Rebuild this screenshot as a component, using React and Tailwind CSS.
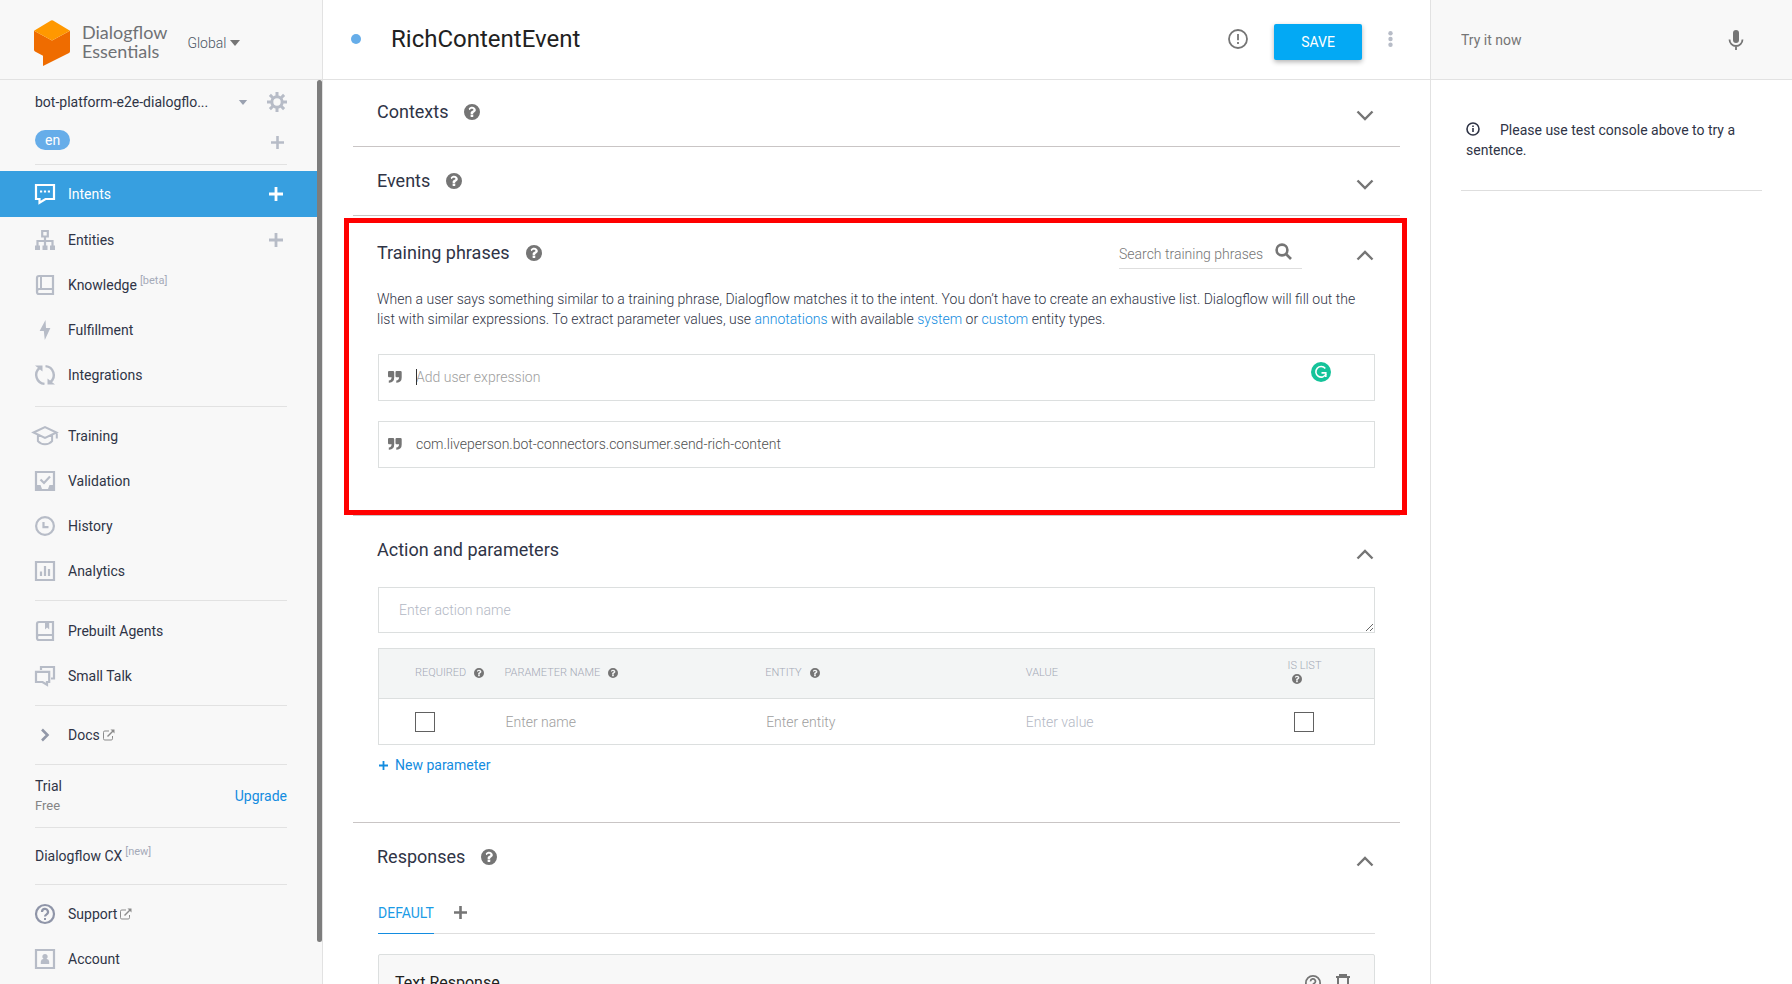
import React from "react";

const HELP_PATH =
  "M8 0a8 8 0 1 0 0 16A8 8 0 0 0 8 0zm1.3 12.6a.4.4 0 0 1-.4.4H7a.4.4 0 0 1-.4-.4v-1.8c0-.2.2-.4.4-.4h1.9c.2 0 .4.2.4.4zm2.5-6.5c0 1.4-1 2-1.7 2.4-.6.3-.9.7-.9 1 0 .2-.1.4-.3.4H7c-.2 0-.4-.2-.4-.4v-.4c0-1.1.9-1.900 1.800-2.300.7-.3 1-.6 1-1.100 0-.6-.700-1-1.500-1-.4 0-.9.1-1.200.3-.3.200-.6.5-1 1-.1.200-.4.2-.5.1L4.900 5c-.2-.1-.2-.4-.1-.5C5.600 3.300 6.700 2.700 8.200 2.700c1.800 0 3.600 1.300 3.600 3.400z";

function Help({ small }) {
  return (
    <svg viewBox="0 0 16 16" className={small ? "size-[10px] shrink-0" : "size-4 shrink-0"} fill="#757575" aria-hidden="true">
      <path d={HELP_PATH} />
    </svg>
  );
}

function Chevron({ up }) {
  return (
    <svg viewBox="0 0 18 12" className="h-3 w-[18px]" fill="none" stroke="#757575" strokeWidth="2.4" aria-hidden="true">
      {up ? <path d="M1.500 10.500 9 3l7.500 7.500" /> : <path d="M1.500 1.500 9 9l7.500-7.500" />}
    </svg>
  );
}

function Plus({ className }) {
  return (
    <svg viewBox="0 0 14 14" className={className} fill="none" stroke="currentColor" strokeWidth="2.8" aria-hidden="true">
      <path d="M7 0v14M0 7h14" />
    </svg>
  );
}

function External() {
  return (
    <svg viewBox="0 0 12 12" className="size-3 shrink-0" fill="none" stroke="#8b8b8b" strokeWidth="1" aria-hidden="true">
      <path d="M6 2H1.800Q.5 2 .5 3.300v6.400Q.5 11 1.800 11h6.400q1.300 0 1.300-1.300V7" />
      <path d="M4.500 7.500 10 2" strokeWidth="1.500" />
      <path d="M7.500.5h4v4z" fill="#8b8b8b" stroke="none" />
    </svg>
  );
}

function Ico({ children, className = "" }) {
  return (
    <svg viewBox="0 0 20 20" className={`size-5 shrink-0 overflow-visible ${className}`} fill="none" stroke="currentColor" strokeWidth="2.2" aria-hidden="true">
      {children}
    </svg>
  );
}

const icons = {
  intents: (
    <Ico className="text-white">
      <path d="M1 1h18v14h-8.500l-6 3.700V15H1z" />
      <path d="M5 7.500h2.200M8.900 7.500h2.200M12.800 7.500H15" />
    </Ico>
  ),
  entities: (
    <Ico>
      <path d="M7.200 1h5.600v5.500H7.200zM10 7v9M2.500 16v-5h15v5" />
      <path d="M0 15.500h5V20H0zM7.500 15.500h5V20h-5zM15 15.500h5V20h-5z" fill="currentColor" stroke="none" />
    </Ico>
  ),
  knowledge: (
    <Ico>
      <path d="M4 1h14v18H4q-2 0-2-2V3q0-2 2-2z" />
      <path d="M6 1v13M18 14H4q-2 0-2 2.500" strokeWidth="2" />
    </Ico>
  ),
  fulfillment: (
    <Ico>
      <path d="M10.500 0 4.600 11h4.200L9.800 20l5.600-12H11z" fill="currentColor" stroke="none" />
    </Ico>
  ),
  integrations: (
    <Ico>
      <path d="M9.500 18.900A9 9 0 0 1 4.500 3M10.500 1.100A9 9 0 0 1 15.500 17" strokeWidth="2.400" />
      <path d="M0 .5h7.500v6zM20 19.500h-7.500v-6z" fill="currentColor" stroke="none" />
    </Ico>
  ),
  training: (
    <Ico>
      <path d="M-1.500 6.500 10 1.200l11.500 5.300L10 11.800zM2.900 9v6.200Q5.500 18.300 10 18.300t7.100-3.100V9M21.800 6.500v6" strokeWidth="2" />
    </Ico>
  ),
  validation: (
    <Ico>
      <path d="M1 1h18v18H1z" />
      <path d="M5.500 8.500 9 12l6-6.500" />
      <path d="M1 14h4.500l1.500 4h6l1.500-4H19v5H1z" fill="currentColor" stroke="none" />
    </Ico>
  ),
  history: (
    <Ico>
      <circle cx="10" cy="10" r="8.900" />
      <path d="M8.500 6v5.200h5" />
    </Ico>
  ),
  analytics: (
    <Ico>
      <path d="M1 1h18v18H1z" />
      <path d="M6 15v-4.500M10 15V5M14 15V8" />
    </Ico>
  ),
  prebuilt: (
    <Ico>
      <path d="M4 1h14v18H4q-2 0-2-2V3q0-2 2-2zM18 14H4q-2 0-2 2.500" />
      <path d="M10 1h4.200v7.500L12.100 6.500 10 8.500z" fill="currentColor" stroke="none" />
    </Ico>
  ),
  talk: (
    <Ico>
      <path d="M6 4V1h13v11.500h-3" />
      <path d="M1 5.800h13.200V16H12v2.800L7.500 16H1z" />
    </Ico>
  ),
  docs: (
    <Ico className="text-[#9298a8]">
      <path d="m7 4.500 5.500 5.500L7 15.500" strokeWidth="2.600" />
    </Ico>
  ),
  support: (
    <Ico className="text-[#8f95a8]">
      <circle cx="10" cy="10" r="9" />
      <path d="M7 8a3 3 0 1 1 4.600 2.400Q10 11.400 10 12.500" />
      <path d="M9 14h2v2H9z" fill="currentColor" stroke="none" />
    </Ico>
  ),
  account: (
    <Ico>
      <path d="M1 1h18v18H1z" />
      <path d="M10 5a2.600 2.600 0 0 1 1.500 4.800q2.700.5 2.700 3V15H5.800v-2.200q0-2.500 2.700-3A2.600 2.600 0 0 1 10 5z" fill="currentColor" stroke="none" />
    </Ico>
  ),
};

function NavItem({ icon, label, tag, external, add, active }) {
  return (
    <div
      className={
        active
          ? "mr-[5px] flex h-[46px] items-center bg-[#379fe0] pr-[34px] pl-[35px] text-white"
          : "mr-[5px] flex h-[45px] items-center pr-[34px] pl-[35px] text-[#2f3446]"
      }
    >
      <a href="#" className="flex flex-1 items-center gap-[13px]">
        <span className={active ? "" : "text-[#b7bcc7]"}>{icons[icon]}</span>
        <span className="flex items-center gap-[3px]">
          {label}
          {tag && <span className="-mt-2 text-[11px] text-[#a5aab8]">{tag}</span>}
          {external && <External />}
        </span>
      </a>
      {add && (
        <button type="button" aria-label={`Create ${label}`} className={active ? "text-white" : "text-[#b7bcc7]"}>
          <Plus className="size-[14px]" />
        </button>
      )}
    </div>
  );
}

function Divider() {
  return <hr className="mr-[35px] ml-[35px] border-[#e2e2e2]" />;
}

function Sidebar() {
  return (
    <aside className="relative flex w-[323px] shrink-0 flex-col border-r border-[#e2e2e2] bg-[#f8f8f8] text-sm">
      <header className="flex h-20 shrink-0 items-center border-b border-[#e2e2e2] pt-1 pl-[33px]">
        <svg viewBox="0 0 38 46" className="mt-0.5 h-[46px] w-[38px] shrink-0" aria-hidden="true">
          <path d="M1 10.800 19 20.500l18-9.700v20.400q0 1.200-1 1.800L10 46V35.800L2 31.500q-1-.6-1-1.700z" fill="#ef6c00" />
          <path d="M1 10.800 18 .6q1-.6 2 0l17 10.200-18 9.700z" fill="#ff9800" />
        </svg>
        <div className="ml-[11px] font-['Lato',sans-serif] text-[18px] leading-[19px] text-[#6f7175]">
          Dialogflow
          <br />
          Essentials
        </div>
        <button type="button" className="mt-0.5 ml-5 flex items-center gap-1 font-light text-[#4b5563]">
          Global
          <svg viewBox="0 0 10 6" className="h-1.5 w-2.5" fill="#757575" aria-hidden="true">
            <path d="M0 0h10L5 6z" />
          </svg>
        </button>
      </header>

      <div className="absolute top-20 right-0 h-[862px] w-[5px] rounded-full bg-[#7d7d7d]" />

      <div className="flex h-11 items-center pr-[35px] pl-[35px]">
        <span className="flex-1 text-[#2f3446]">bot-platform-e2e-dialogflo...</span>
        <button type="button" aria-label="Choose agent" className="mr-[19px]">
          <svg viewBox="0 0 10 6" className="h-[5px] w-2.5" fill="#9aa1b0" aria-hidden="true">
            <path d="M0 0h10L5 6z" />
          </svg>
        </button>
        <button type="button" aria-label="Agent settings">
          <svg viewBox="0 0 20 20" className="size-5" fill="none" stroke="#b7bcc7" aria-hidden="true">
            <circle cx="10" cy="10" r="5.200" strokeWidth="3" />
            <path d="M10 0v4M10 16v4M0 10h4M16 10h4M2.900 2.900l2.900 2.900M14.200 14.200l2.900 2.900M2.900 17.100l2.900-2.900M14.200 5.800l2.900-2.900" strokeWidth="3" />
          </svg>
        </button>
      </div>
      <div className="flex h-10 items-center justify-between pr-[38px] pb-2 pl-[35px]">
        <button type="button" className="rounded-full bg-[#66ade9] px-[10px] leading-5 text-white">
          en
        </button>
        <button type="button" aria-label="Add language" className="mt-1 text-[#b7bcc7]">
          <Plus className="size-[13px]" />
        </button>
      </div>
      <Divider />

      <nav className="pt-1.5">
        <NavItem icon="intents" label="Intents" add active />
        <NavItem icon="entities" label="Entities" add />
        <NavItem icon="knowledge" label="Knowledge" tag="[beta]" />
        <NavItem icon="fulfillment" label="Fulfillment" />
        <NavItem icon="integrations" label="Integrations" />
      </nav>
      <div className="h-[9px]" />
      <Divider />
      <nav className="pt-1.5 pb-[7px]">
        <NavItem icon="training" label="Training" />
        <NavItem icon="validation" label="Validation" />
        <NavItem icon="history" label="History" />
        <NavItem icon="analytics" label="Analytics" />
      </nav>
      <Divider />
      <nav className="py-[7px]">
        <NavItem icon="prebuilt" label="Prebuilt Agents" />
        <NavItem icon="talk" label="Small Talk" />
      </nav>
      <Divider />
      <nav className="pt-1.5 pb-[7px]">
        <NavItem icon="docs" label="Docs" external />
      </nav>
      <Divider />
      <div className="flex h-[62px] items-center justify-between px-[35px]">
        <div className="leading-5">
          <div className="text-[#2f3446]">Trial</div>
          <div className="text-[13px] leading-5 text-[#858585]">Free</div>
        </div>
        <a href="#" className="text-[#138ce0]">
          Upgrade
        </a>
      </div>
      <Divider />
      <div className="flex h-14 items-center px-[35px] text-[#2f3446]">
        <a href="#" className="flex items-center gap-[3px]">
          Dialogflow CX
          <span className="-mt-2 text-[11px] text-[#a5aab8]">[new]</span>
        </a>
      </div>
      <Divider />
      <nav className="pt-1.5">
        <NavItem icon="support" label="Support" external />
        <NavItem icon="account" label="Account" />
      </nav>
    </aside>
  );
}

function SectionHead({ title, help, open, children }) {
  return (
    <div className="flex h-[68px] items-center pr-[26px] pl-6">
      <h2 className="text-lg text-[#2f3446]">{title}</h2>
      {help && (
        <button type="button" aria-label={`Help on ${title}`} className="ml-4">
          <Help />
        </button>
      )}
      <div className="flex-1" />
      {children}
      <button type="button" aria-label={`Toggle ${title}`} className={children ? "mt-1" : "mt-[7px]"}>
        <Chevron up={open} />
      </button>
    </div>
  );
}

function Quote() {
  return (
    <svg viewBox="0 0 14 12" className="h-3 w-[14px] shrink-0" fill="#757575" aria-hidden="true">
      <path d="M1 0h4q1.200 0 1.200 1.200V6.500Q6.200 11.500 1.200 11.800H.8V9.500Q3.600 9.300 3.600 6.200H1Q0 6.200 0 5V1.200Q0 0 1 0zM8.500 0h4q1.200 0 1.200 1.200V6.500q0 5-5 5.300h-.4V9.500q2.800-.2 2.800-3.300H8.500q-1 0-1-1.200V1.200Q7.500 0 8.500 0z" />
    </svg>
  );
}

function TrainingPhrases() {
  return (
    <section className="relative h-[300px] border-b border-[#c9c5c5]">
      <div className="pointer-events-none absolute top-0.5 -right-[7px] bottom-0 -left-[9px] border-5 border-[#ff0000]" />
      <div className="pt-[3px]">
        <SectionHead title="Training phrases" help open>
          <div className="mt-1.5 mr-[54px] flex w-[183px] items-center border-b border-[#dedede] pb-1">
            <input
              aria-label="Search training phrases"
              placeholder="Search training phrases"
              className="w-[156px] text-sm font-light outline-none placeholder:text-[#757575]"
            />
            <button type="button" aria-label="Search" className="-mt-[5px]">
              <svg viewBox="0 0 17 17" className="size-[17px]" fill="none" stroke="#757575" strokeWidth="2.600" aria-hidden="true">
                <circle cx="7" cy="7" r="5.400" />
                <path d="m11 11 5 5" />
              </svg>
            </button>
          </div>
        </SectionHead>
      </div>
      <p className="mt-[2px] px-6 text-sm leading-5 font-light text-[#2f3446]">
        When a user says something similar to a training phrase, Dialogflow matches it to the intent. You don’t have to create an
        exhaustive list. Dialogflow will fill out the list with similar expressions. To extract parameter values, use{" "}
        <a href="#" className="text-[#138ce0]">annotations</a> with available{" "}
        <a href="#" className="text-[#138ce0]">system</a> or{" "}
        <a href="#" className="text-[#138ce0]">custom</a> entity types.
      </p>
      <div className="mx-[25px] mt-[25px] flex h-[47px] items-center border border-[#dcdfdf] pb-0.5 pl-[9px]">
        <Quote />
        <div className="relative ml-[14px] flex flex-1 items-center">
          <input
            aria-label="Add user expression"
            placeholder="Add user expression"
            className="w-full text-sm font-light outline-none placeholder:text-[#9e9e9e]"
          />
          <span className="absolute left-0 h-4 w-px bg-[#333333]" />
        </div>
        <svg viewBox="0 0 20 20" className="mr-[43px] mb-[9px] size-5 shrink-0" aria-hidden="true">
          <circle cx="10" cy="10" r="10" fill="#15c39a" />
          <path d="M14.300 6.500A5.300 5.300 0 1 0 15 12" fill="none" stroke="#fff" strokeWidth="1.600" />
          <path d="M10.500 10.900h4.300v4" fill="none" stroke="#fff" strokeWidth="1.600" />
        </svg>
      </div>
      <div className="mx-[25px] mt-5 flex h-[47px] items-center border border-[#dcdfdf] pb-0.5 pl-[9px]">
        <Quote />
        <input
          aria-label="User expression"
          defaultValue="com.liveperson.bot-connectors.consumer.send-rich-content"
          className="ml-[14px] flex-1 text-sm font-light text-[#505050] outline-none"
        />
      </div>
    </section>
  );
}

function ActionParameters() {
  return (
    <section className="h-[307px] border-b border-[#c9c5c5]">
      <SectionHead title="Action and parameters" open />
      <div className="px-[25px]">
        <textarea
          aria-label="Action name"
          rows={1}
          placeholder="Enter action name"
          className="mt-[3px] block h-[46px] w-full resize border border-[#dcdfdf] px-5 py-3 text-sm font-light outline-none placeholder:text-[#b3b8c4]"
        />
        <table className="mt-[15px] w-full table-fixed border border-[#dcdfdf] text-left">
          <thead className="bg-[#f3f5f5] text-[11px] text-[#a4a9b6]">
            <tr className="h-[50px] border-b border-[#dcdfdf]">
              <th className="w-[126px] p-0 pl-9 font-light">
                <span className="flex items-center gap-2">REQUIRED <span className="pb-0.5"><Help small /></span></span>
              </th>
              <th className="p-0 font-light">
                <span className="flex items-center gap-2">PARAMETER NAME <span className="pb-0.5"><Help small /></span></span>
              </th>
              <th className="p-0 font-light">
                <span className="flex items-center gap-2">ENTITY <span className="pb-0.5"><Help small /></span></span>
              </th>
              <th className="p-0 font-light">VALUE</th>
              <th className="w-[88px] p-0 pb-1.5 leading-4 font-light">
                <span className="block pl-px">IS LIST</span>
                <span className="block pl-[5px]"><Help small /></span>
              </th>
            </tr>
          </thead>
          <tbody>
            <tr className="h-[46px]">
              <td className="p-0 pl-9">
                <input type="checkbox" aria-label="Required" className="block size-5 appearance-none border border-[#616161] bg-white" />
              </td>
              <td className="p-0 pl-px">
                <input aria-label="Parameter name" placeholder="Enter name" className="w-full text-sm font-light outline-none placeholder:text-[#9e9e9e]" />
              </td>
              <td className="p-0 pl-px">
                <input aria-label="Entity" placeholder="Enter entity" className="w-full text-sm font-light outline-none placeholder:text-[#9e9e9e]" />
              </td>
              <td className="p-0">
                <input aria-label="Value" placeholder="Enter value" className="w-full text-sm font-light outline-none placeholder:text-[#b3b8c4]" />
              </td>
              <td className="p-0 pl-[7px]">
                <input type="checkbox" aria-label="Is list" className="block size-5 appearance-none border border-[#616161] bg-white" />
              </td>
            </tr>
          </tbody>
        </table>
        <button type="button" className="mt-[10px] ml-px flex items-center gap-[7px] text-sm text-[#138ce0]">
          <Plus className="size-[9px]" />
          New parameter
        </button>
      </div>
    </section>
  );
}

function Responses() {
  return (
    <section>
      <SectionHead title="Responses" help open />
      <div className="px-[25px]">
        <div className="flex h-[43px] border-b border-[#dedede] text-sm" role="tablist">
          <button type="button" role="tab" aria-selected="true" className="-mb-px border-b border-[#138ce0] pt-0.5 text-[#1a9be6]">
            DEFAULT
          </button>
          <button type="button" aria-label="Add response tab" className="ml-5 text-[#757575]">
            <Plus className="size-[13px]" />
          </button>
        </div>
        <div className="mt-5 flex h-[120px] items-start justify-between rounded-xs border border-[#dcdfdf] bg-[#f8f8f8] pt-4 pr-6 pl-4">
          <h3 className="text-base text-[#212121]">Text Response</h3>
          <div className="flex gap-[15px] pt-[3px]">
            <button type="button" aria-label="Help on text response" className="text-[#757575]">
              <svg viewBox="0 0 20 20" className="size-4" fill="none" stroke="currentColor" strokeWidth="2.200" aria-hidden="true">
                <circle cx="10" cy="10" r="8.900" />
                <path d="M7 8a3 3 0 1 1 4.600 2.400Q10 11.400 10 12.500M10 14v2" />
              </svg>
            </button>
            <button type="button" aria-label="Delete text response" className="text-[#757575]">
              <svg viewBox="0 0 14 18" className="h-[18px] w-[14px]" fill="none" stroke="currentColor" strokeWidth="2" aria-hidden="true">
                <path d="M0 3h14M4 3V1h6v2M2 4v13h10V4" />
              </svg>
            </button>
          </div>
        </div>
      </div>
    </section>
  );
}

export default function App() {
  return (
    <div className="flex h-screen overflow-hidden bg-white font-['Roboto',sans-serif]">
      <Sidebar />

      <main className="flex min-w-0 flex-1 flex-col">
        <header className="z-10 flex h-20 shrink-0 items-center border-b border-[#e2e2e2] bg-white pr-[37px] pb-0.5 pl-7">
          <span className="size-[10px] rounded-full bg-[#66ade9]" />
          <h1 className="ml-[30px] flex-1 text-2xl text-[#212121]">RichContentEvent</h1>
          <button type="button" aria-label="Intent status">
            <svg viewBox="0 0 20 20" className="size-5" fill="none" stroke="#757575" strokeWidth="1.800" aria-hidden="true">
              <circle cx="10" cy="10" r="9" />
              <path d="M10 5v6.200M10 13v2" />
            </svg>
          </button>
          <button
            type="button"
            className="mt-[7px] ml-[26px] h-9 w-[88px] rounded-xs bg-[#03a9f4] text-sm text-white shadow-[0_2px_5px_rgba(0,0,0,0.3)]"
          >
            SAVE
          </button>
          <button type="button" aria-label="More options" className="ml-[26px]">
            <svg viewBox="0 0 5 16" className="h-4 w-[5px]" fill="#b7bcc7" aria-hidden="true">
              <circle cx="2.500" cy="2.200" r="2.200" />
              <circle cx="2.500" cy="8" r="2.200" />
              <circle cx="2.500" cy="13.800" r="2.200" />
            </svg>
          </button>
        </header>

        <div className="-mt-0.5 min-h-0 flex-1 overflow-hidden px-[30px]">
          <section className="border-b border-[#c9c5c5]">
            <SectionHead title="Contexts" help />
          </section>
          <section className="border-b border-[#c9c5c5]">
            <SectionHead title="Events" help />
          </section>
          <TrainingPhrases />
          <ActionParameters />
          <Responses />
        </div>
      </main>

      <aside className="flex w-[362px] shrink-0 flex-col border-l border-[#e2e2e2] text-sm">
        <header className="flex h-20 items-center border-b border-[#e2e2e2] bg-[#f8f8f8] pr-12 pl-[30px]">
          <input
            aria-label="Try it now"
            placeholder="Try it now"
            className="min-w-0 flex-1 outline-none placeholder:text-[#757575]"
          />
          <button type="button" aria-label="Use microphone">
            <svg viewBox="0 0 16 20" className="h-5 w-4" aria-hidden="true">
              <rect x="5" y="0" width="6" height="13" rx="3" fill="#757575" />
              <path d="M1.500 9.500a6.500 6.500 0 0 0 13 0M8 16v4" fill="none" stroke="#757575" strokeWidth="1.800" />
            </svg>
          </button>
        </header>
        <div className="mr-[30px] ml-[30px] border-b border-[#dedede] pt-10 pr-5 pb-[30px] pl-[5px] leading-5 text-[#2f3446]">
          <svg viewBox="0 0 14 14" className="mr-5 inline size-[14px] align-[-1px]" fill="none" stroke="#2f3446" strokeWidth="1.600" aria-hidden="true">
            <circle cx="7" cy="7" r="6" />
            <path d="M7 6v4M7 3.500V5" />
          </svg>
          Please use test console above to try a sentence.
        </div>
      </aside>
    </div>
  );
}
